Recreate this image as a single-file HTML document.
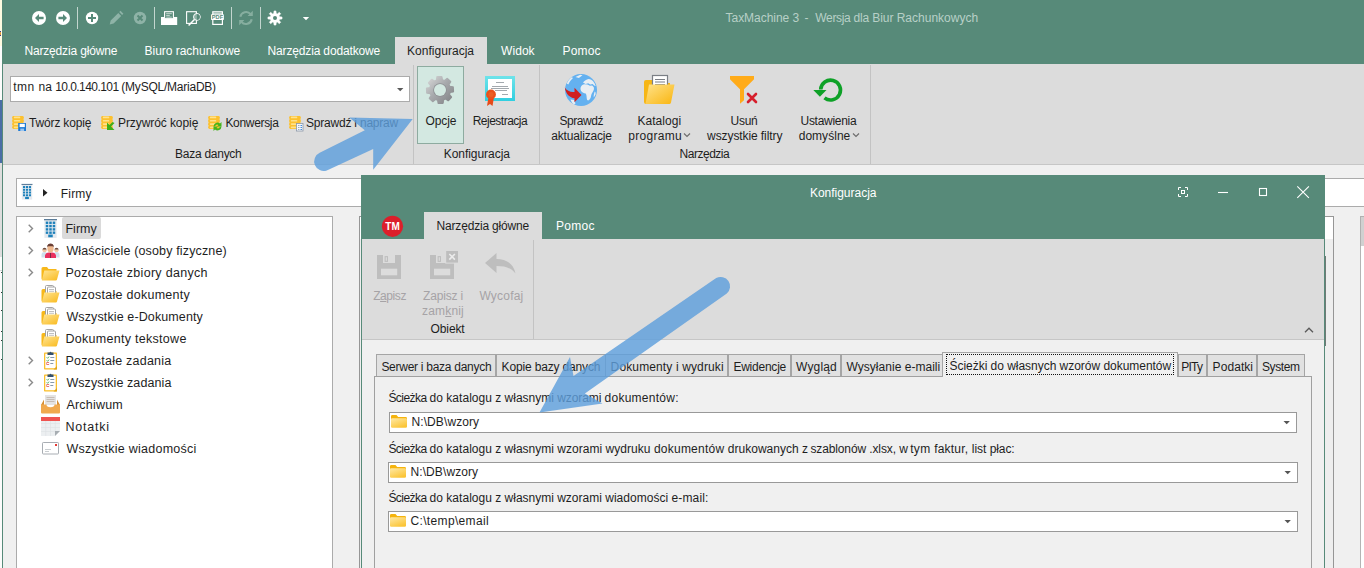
<!DOCTYPE html>
<html lang="pl">
<head>
<meta charset="utf-8">
<title>TaxMachine 3 - Konfiguracja</title>
<style>
html,body{margin:0;padding:0;overflow:hidden}
body{width:1364px;height:568px;overflow:hidden;position:relative;background:#f0f0f0;font-family:"Liberation Sans",sans-serif;font-size:12px;color:#1e1e1e}
div,span,svg{box-sizing:border-box}
.a{position:absolute}
.t{position:absolute;white-space:pre;line-height:16px;height:16px}
.fT{font-size:12.5px}
u{text-decoration:underline;text-decoration-thickness:1px;text-underline-offset:1px}
.sep{position:absolute;width:1px;background:#c3c3c3}
.combo{position:absolute;background:#fff;border:1px solid #999}
.tab{position:absolute;top:354px;height:22px;background:#e1e1e1;border:1px solid #a5a5a5;border-bottom:none}
svg{position:absolute;overflow:visible}
</style>
</head>
<body>
<div id="root" style="position:absolute;left:0;top:0;width:1364px;height:568px;overflow:hidden">
<!-- desktop strip at far left -->
<div class="a" style="left:0;top:0;width:2px;height:568px;background:#fcfcfc"></div>
<div class="a" style="left:0;top:0;width:2px;height:46px;background:#fffbe1"></div>
<div class="a" style="left:0;top:31px;width:1px;height:5px;background:#e39a3c;border-top:1px solid #3c3c8c;border-bottom:1px solid #3c3c8c"></div>
<div class="a" style="left:0;top:100px;width:2px;height:63px;background:#4a6ea6"></div>
<div class="a" style="left:0;top:163px;width:2px;height:94px;background:#dedede"></div>
<div class="a" style="left:0;top:270px;width:2px;height:1px;background:#d8d8d8"></div>
<div class="a" style="left:1px;top:272px;width:1px;height:1px;background:#333"></div>
<div class="a" style="left:1px;top:292px;width:1px;height:1px;background:#333"></div>
<div class="a" style="left:1px;top:310px;width:1px;height:1px;background:#333"></div>
<div class="a" style="left:1px;top:331px;width:1px;height:1px;background:#333"></div>
<div class="a" style="left:1px;top:340px;width:1px;height:1px;background:#333"></div>
<div class="a" style="left:1px;top:359px;width:1px;height:1px;background:#333"></div>

<!-- main window -->
<div class="a" style="left:2px;top:0;width:1362px;height:568px;background:#f0f0f0">
  <div class="a" style="left:0;top:0;width:1362px;height:64px;background:#578a79"></div>
  <div class="a" style="left:0;top:64px;width:1362px;height:100px;background:#dcdcdc"></div>
  <div class="a" style="left:0;top:164px;width:1362px;height:1px;background:#c6c6c6"></div>
  <div class="a" style="left:0;top:0;width:1px;height:568px;background:#578a79"></div>
</div>
<!-- active ribbon tab -->
<div class="a" style="left:395px;top:37px;width:92px;height:28px;background:#dcdcdc"></div>
<!-- ribbon: Baza danych -->
<div class="combo" style="left:10px;top:76px;width:400px;height:26px;border-color:#ababab"></div>
<svg style="left:397px;top:88px" width="7" height="4"><path d="M0 0h6.400l-3.200 3.200z" fill="#5a5a5a"/></svg>
<div class="sep" style="left:413px;top:65px;height:99px"></div>
<div class="a" style="left:417px;top:66px;width:47px;height:78px;background:#d3e8e1;border:1px solid #8eaba0"></div>
<div class="sep" style="left:539px;top:65px;height:99px"></div>
<div class="sep" style="left:870px;top:65px;height:99px"></div>
<svg id="qat" style="left:0;top:0" width="320" height="36" viewBox="0 0 320 36">
  <g fill="#fff">
    <circle cx="39" cy="18" r="7"/>
    <circle cx="63" cy="18" r="7"/>
    <circle cx="92" cy="18" r="6.2"/>
  </g>
  <path d="M35 18l4-4v2.7h4.6v2.6H39V22z" fill="#578a79"/>
  <path d="M67 18l-4-4v2.7h-4.6v2.6H63V22z" fill="#578a79"/>
  <path d="M88 18h8M92 14v8" stroke="#578a79" stroke-width="2" fill="none"/>
  <g fill="#8eb3a7">
    <path d="M109.700 24.500l1-3.900 7.600-7.600 2.900 2.900-7.600 7.600zM119.200 12.100l1.300-1.300 2.900 2.900-1.300 1.300z"/>
    <circle cx="140" cy="18" r="6.2"/>
  </g>
  <path d="M137.500 15.500l5 5M142.500 15.500l-5 5" stroke="#578a79" stroke-width="2" fill="none"/>
  <g fill="#c3d6cf">
    <rect x="77" y="7" width="1" height="22"/>
    <rect x="154" y="7" width="1" height="22"/>
    <rect x="231" y="7" width="1" height="22"/>
    <rect x="260" y="7" width="1" height="22"/>
  </g>
  <!-- print -->
  <rect x="161" y="17" width="16.200" height="8" fill="#fff"/>
  <rect x="164.600" y="11.700" width="8.800" height="7" fill="#578a79" stroke="#fff" stroke-width="1.100"/>
  <path d="M166.200 13.700h5.600M166.200 15.400h3.600M166.200 17.100h5.600" stroke="#d4e3dd" stroke-width="0.900"/>
  <!-- preview -->
  <rect x="186.600" y="11.700" width="9.800" height="11.700" fill="none" stroke="#fff" stroke-width="1.100"/>
  <circle cx="196.900" cy="16.900" r="3.400" fill="#8fb3a6" stroke="#fff" stroke-width="1"/>
  <path d="M196.900 13.900a3 3 0 0 1 0 6z" fill="#578a79"/>
  <path d="M194.400 19.500l-5.800 6" stroke="#fff" stroke-width="1.500"/>
  <!-- pdf -->
  <rect x="212.800" y="11.800" width="9.600" height="12.600" fill="none" stroke="#fff" stroke-width="1.200"/>
  <path d="M213 13.300h9.500" stroke="#fff" stroke-width="0.800"/>
  <rect x="211" y="14.200" width="12.900" height="5.800" rx="0.800" fill="#fff"/>
  <text x="217.450" y="19.300" font-family="'Liberation Sans',sans-serif" font-size="5.600" font-weight="bold" fill="#578a79" text-anchor="middle" letter-spacing="0.100">PDF</text>
  <!-- refresh dim -->
  <g fill="none" stroke="#86ae9f" stroke-width="2.100">
    <path d="M240.300 16.800a5.900 5.900 0 0 1 10.300-2.700"/>
    <path d="M251.700 19.200a5.900 5.900 0 0 1-10.300 2.700"/>
  </g>
  <path d="M252.800 10.800v5.200h-5.200zM239.200 25.200v-5.200h5.200z" fill="#86ae9f"/>
  <!-- gear -->
  <g transform="translate(275 18)">
    <path d="M-1.22 -4.54L-0.93 -7.04L0.93 -7.04L1.22 -4.54L2.35 -4.07L4.32 -5.63L5.63 -4.32L4.07 -2.35L4.54 -1.22L7.04 -0.93L7.04 0.93L4.54 1.22L4.07 2.35L5.63 4.32L4.32 5.63L2.35 4.07L1.22 4.54L0.93 7.04L-0.93 7.04L-1.22 4.54L-2.35 4.07L-4.32 5.63L-5.63 4.32L-4.07 2.35L-4.54 1.22L-7.04 0.93L-7.04 -0.93L-4.54 -1.22L-4.07 -2.35L-5.63 -4.32L-4.32 -5.63L-2.35 -4.07Z" fill="#fff" stroke="#fff" stroke-width="0.600" stroke-linejoin="round"/>
    <circle r="2" fill="#578a79"/>
  </g>
  <path d="M302.800 17h6.400l-3.200 3.200z" fill="#fff"/>
</svg>
<svg id="ribicons" style="left:0;top:64px" width="880" height="100" viewBox="0 64 880 100">
  <defs>
    <linearGradient id="gg" x1="0" y1="0" x2="1" y2="1"><stop offset="0" stop-color="#dadada"/><stop offset="0.45" stop-color="#a9abae"/><stop offset="1" stop-color="#7f8083"/></linearGradient>
    <linearGradient id="fg" x1="0" y1="0" x2="1" y2="1"><stop offset="0" stop-color="#ffe28a"/><stop offset="1" stop-color="#f9b50f"/></linearGradient>
    <linearGradient id="cy" x1="0" y1="0" x2="0" y2="1"><stop offset="0" stop-color="#6fe3ea"/><stop offset="1" stop-color="#30cfe0"/></linearGradient>
    <linearGradient id="db" x1="0" y1="0" x2="1" y2="0"><stop offset="0" stop-color="#ffe27a"/><stop offset="0.5" stop-color="#ffd23f"/><stop offset="1" stop-color="#f7b51c"/></linearGradient>
  </defs>
  <!-- gear -->
  <g transform="translate(440 90)">
    <path d="M-3.24 -9.67L-2.88 -12.98L1.51 -13.21L2.21 -9.96L4.55 -9.13L7.15 -11.22L10.41 -8.28L8.60 -5.48L9.67 -3.24L12.98 -2.88L13.21 1.51L9.96 2.21L9.13 4.55L11.22 7.15L8.28 10.41L5.48 8.60L3.24 9.67L2.88 12.98L-1.51 13.21L-2.21 9.96L-4.55 9.13L-7.15 11.22L-10.41 8.28L-8.60 5.48L-9.67 3.24L-12.98 2.88L-13.21 -1.51L-9.96 -2.21L-9.13 -4.55L-11.22 -7.15L-8.28 -10.41L-5.48 -8.60Z" fill="url(#gg)" stroke="url(#gg)" stroke-width="1.8" stroke-linejoin="round"/>
    <circle r="6.800" fill="#8d8f93"/>
    <circle r="6" fill="#d3e8e1"/>
  </g>
  <!-- certificate -->
  <rect x="485" y="76" width="30" height="25" fill="url(#cy)"/>
  <rect x="488" y="79" width="24" height="19" fill="#fff"/>
  <g stroke="#a3a9ae" stroke-width="1">
    <path d="M496 82.500h8M492 86.500h16M491 88.500h18M495 90.500h12M502 94.500h6"/>
  </g>
  <path d="M488.500 97l-1.500 9 3-2 2.500 2 1.500-9z" fill="#e64a19"/>
  <circle cx="491" cy="94.400" r="4.900" fill="#e8521c"/>
  <circle cx="491" cy="94.400" r="2.500" fill="#ea6025"/>
  <!-- globe -->
  <circle cx="581" cy="90" r="16" fill="#64b1f0"/>
  <g fill="#e9eef3">
    <path d="M583 82.500c1.500-1.800 3.500-3 5.500-3.400c2 0 3.600 1 4.800 2.500c1 1.300 1.800 2.800 2.400 4.400l-1.600-0.400l-1.400-1.700l-2.500 0.600l-2-1.200l-2.600 0.800z"/>
    <path d="M580.500 88c0.400-2 1.700-3.400 3.600-3.800l3.300 0.300l2.500 1.300l2.300-0.300l1.600 1.700c0.400 1.600 0 3-0.800 4.300c-1 1.600-1.800 3-2 4.800c-0.200 1.700-1 3.200-2.300 4c-1 0.400-1.700-0.300-1.900-1.500c-0.300-2 0-3.700-1.100-5.300c-1.700-0.400-3.500-1-4.600-2.500c-0.500-1-0.700-2-0.600-3z"/>
    <path d="M594.800 91.500c0.800 0.600 1 1.800 0.600 3.200l-1.600 2.800c-0.300-2 0.200-4 1-6z"/>
    <path d="M575.500 77l4.800-2.300l2.200 0.600l-3.600 2.600z"/>
    <path d="M566.800 83.500c1-2.500 2.800-4.800 5-6.300l1.200 0.900c-2 1.800-3.700 3.900-4.700 6.500z"/>
    <path d="M570.500 99.500l3.600 0.500l1.400 3.600l-1.600 0.800c-1.600-1.300-2.700-3-3.400-4.900z"/>
  </g>
  <path d="M564.800 87.500c1 6.500 5 10.300 9.700 10.800v3.900l7-7.200l-7-7.200v4.100c-4 0.500-7.700-1.200-9.700-4.400z" fill="#d01f1f"/>
  <!-- folder with paper -->
  <path d="M644 82a2 2 0 0 1 2-2h7l2 3h15v19a2 2 0 0 1-2 2h-22a2 2 0 0 1-2-2z" fill="#f6b616"/>
  <rect x="652.500" y="75.500" width="15" height="16" fill="#fff" stroke="#7b7f85" stroke-width="1.200"/>
  <path d="M655 79.500h10M655 82h10M655 84.500h10" stroke="#7b7f85" stroke-width="1.200"/>
  <path d="M649 84.500h25.500l-3.500 18a2 2 0 0 1-2 1.500h-23.500z" fill="url(#fg)"/>
  <!-- filter -->
  <path d="M730 76h24v3.300l-10 10v11l-4 3.500v-14.500l-10-10z" fill="#ffab19"/>
  <path d="M748 94l8 8M756 94l-8 8" stroke="#d61f2c" stroke-width="2.600" stroke-linecap="round" fill="none"/>
  <!-- refresh green -->
  <path d="M820.700 89.500a9.900 9.900 0 1 1 3.800 8.400" fill="none" stroke="#0ea127" stroke-width="3.600"/>
  <path d="M813.300 90h13.200l-6.600 6.800z" fill="#0ea127"/>
  <!-- chevrons -->
  <g fill="none" stroke="#6e6e6e" stroke-width="1.200">
    <path d="M684 133.500l3 3 3-3"/>
    <path d="M853 133.500l3 3 3-3"/>
  </g>
  <!-- small db icons -->
  <g id="dbi">
    <rect x="12.600" y="117" width="10.800" height="11" fill="#fdc63c"/>
    <rect x="12.200" y="116" width="11.600" height="3.100" rx="1.400" fill="#fcc02e"/><rect x="13.800" y="116.6" width="6.500" height="1.700" rx="0.850" fill="#ffe28c"/><rect x="12.200" y="119.3" width="11.600" height="3.100" rx="1.400" fill="#fcc02e"/><rect x="13.800" y="119.9" width="6.500" height="1.700" rx="0.850" fill="#ffe28c"/><rect x="12.200" y="122.6" width="11.600" height="3.100" rx="1.400" fill="#fcc02e"/><rect x="13.800" y="123.2" width="6.500" height="1.700" rx="0.850" fill="#ffe28c"/><rect x="12.200" y="125.9" width="11.600" height="3.100" rx="1.400" fill="#fcc02e"/><rect x="13.800" y="126.5" width="6.500" height="1.700" rx="0.850" fill="#ffe28c"/>
  </g>
  <use href="#dbi" x="89"/>
  <use href="#dbi" x="196"/>
  <use href="#dbi" x="277"/>
  <!-- save overlay -->
  <path d="M18.200 123h7.800v8h-7.800z" fill="#1f7ad4"/>
  <rect x="19.600" y="123.800" width="5.200" height="3.300" fill="#fff"/>
  <rect x="20.300" y="128.600" width="3.800" height="2.400" fill="#9cc6ef"/>
  <!-- green arrow overlay -->
  <path d="M114.500 123l-3.500 3.500 3.500 3.500h-7.500v-7.500l2.500 2.500 3-3z" fill="#3fae19" transform="rotate(0)"/>
  <!-- green cycle overlay -->
  <g fill="#46b41c">
    <path d="M213.500 126.500a4 4 0 0 1 6.500-3l1.500-1.500v4.500h-4.500l1.500-1.500a2.500 2.500 0 0 0-3.500 1.500z"/>
    <path d="M221.500 126.500a4 4 0 0 1-6.500 3l-1.500 1.500v-4.500h4.500l-1.500 1.500a2.500 2.500 0 0 0 3.500-1.500z"/>
  </g>
  <!-- doc overlay -->
  <rect x="296.500" y="123.500" width="6.500" height="7.500" fill="#f4f7fb" stroke="#8b97a8" stroke-width="0.800"/>
  <path d="M298 125.500h1.500M298 127.500h1.500M298 129.500h1.500" stroke="#8b97a8" stroke-width="0.800"/>
  <path d="M300.500 125.500h1.500M300.500 127.500h1.500M300.500 129.500h1.500" stroke="#2f80d8" stroke-width="0.900"/>
</svg>

<!-- breadcrumb -->
<div class="a" style="left:16px;top:178px;width:1360px;height:29px;background:#fff;border:1px solid #ababab"></div>
<svg style="left:43px;top:189px" width="6" height="9"><path d="M0 0l4.500 3.700l-4.500 3.700z" fill="#222"/></svg>

<!-- tree -->
<div class="a" style="left:16px;top:216px;width:317px;height:360px;background:#fff;border:1px solid #ababab"></div>
<div class="a" style="left:62px;top:217px;width:39px;height:22px;background:#dadada;border-radius:2px"></div>
<svg id="treeicons" style="left:0;top:176px" width="340" height="392" viewBox="0 176 340 392">
  <defs>
    <linearGradient id="tf" x1="0" y1="0" x2="1" y2="1"><stop offset="0" stop-color="#ffe596"/><stop offset="1" stop-color="#f9b91a"/></linearGradient>
    <g id="chev"><path d="M0 0l3.800 3.800l-3.800 3.800" fill="none" stroke="#8a8a8a" stroke-width="1.400"/></g>
    <g id="bld">
      <rect x="0.300" y="1" width="10.400" height="15" fill="#e3e9ef"/>
      <rect x="0" y="0" width="11" height="1.100" fill="#5b7c99"/>
      <g fill="#1d80ba"><rect x="1.5" y="2.2" width="2.1" height="2"/><rect x="4.45" y="2.2" width="2.1" height="2"/><rect x="7.4" y="2.2" width="2.1" height="2"/><rect x="1.5" y="5" width="2.1" height="2"/><rect x="4.45" y="5" width="2.1" height="2"/><rect x="7.4" y="5" width="2.1" height="2"/><rect x="1.5" y="7.8" width="2.1" height="2"/><rect x="4.45" y="7.8" width="2.1" height="2"/><rect x="7.4" y="7.8" width="2.1" height="2"/><rect x="1.5" y="10.6" width="2.1" height="2"/><rect x="4.45" y="10.6" width="2.1" height="2"/><rect x="7.4" y="10.6" width="2.1" height="2"/><rect x="3.600" y="13.200" width="3.800" height="2.300"/></g>
    </g>
    <g id="fold">
      <path d="M0.500 2.500a1.500 1.500 0 0 1 1.500-1.500h4l1.500 2h8v9.500a1.500 1.500 0 0 1-1.500 1.500h-12a1.500 1.500 0 0 1-1.500-1.500z" fill="#f7b81b"/>
      <path d="M3.300 4.500h15.200l-2.500 9a1.300 1.300 0 0 1-1.200 1h-14z" fill="url(#tf)"/>
    </g>
    <g id="foldd">
      <path d="M0.500 2.500a1.500 1.500 0 0 1 1.500-1.500h4l1.500 2h8v9.500a1.500 1.500 0 0 1-1.500 1.500h-12a1.500 1.500 0 0 1-1.500-1.500z" fill="#f7b81b"/>
      <rect x="4.500" y="-2.500" width="8" height="8" rx="1" fill="#fff" stroke="#9a9a9a" stroke-width="0.900"/>
      <rect x="6.500" y="-1" width="8" height="8" rx="1" fill="#fff" stroke="#9a9a9a" stroke-width="0.900"/>
      <path d="M8 1.500h5M8 3.300h5" stroke="#b0b0b0" stroke-width="0.800"/>
      <path d="M3.300 4.500h15.200l-2.500 9a1.300 1.300 0 0 1-1.200 1h-14z" fill="url(#tf)"/>
    </g>
    <g id="clip">
      <rect x="0" y="1.500" width="13" height="17" rx="0.800" fill="#fbc02d"/>
      <rect x="1.300" y="2.800" width="10.400" height="14.400" fill="#fff"/>
      <path d="M13 18.500l-3.500 0 3.500-3.500z" fill="#e0a61c"/>
      <path d="M3.500 1.500h2a1.100 1.100 0 0 1 2 0h2v2.500h-6z" fill="#34516f"/>
      <path d="M6.300 6.500h4M6.300 9.500h4M6.300 12.500h3" stroke="#7b8fa3" stroke-width="0.900"/>
      <path d="M2.700 6.400l0.900 0.900 1.400-1.700M2.700 9.400l0.900 0.900 1.400-1.700" fill="none" stroke="#3aa657" stroke-width="0.900"/>
      <rect x="2.800" y="11.600" width="1.900" height="1.900" fill="none" stroke="#e25555" stroke-width="0.800"/>
    </g>
  </defs>
  <!-- breadcrumb building -->
  <use href="#bld" transform="translate(21.500 183.900) scale(1 0.980)"/>
  <!-- row 1 -->
  <use href="#chev" x="28.700" y="224.700"/>
  <use href="#bld" transform="translate(44 219) scale(1.180 1.180)"/>
  <!-- row 2 -->
  <use href="#chev" x="28.700" y="246.700"/>
  <g>
    <circle cx="44.500" cy="250.300" r="2.100" fill="#f1c9a5"/>
    <path d="M41.500 257.500v-2.500a3 3 0 0 1 6 0v2.500z" fill="#cfe0ec"/>
    <path d="M42.400 249.500a2.200 2.200 0 0 1 4.300 0z" fill="#6d4c41"/>
    <circle cx="56.500" cy="250.300" r="2.100" fill="#f1c9a5"/>
    <path d="M53.500 257.500v-2.500a3 3 0 0 1 6 0v2.500z" fill="#cfe0ec"/>
    <path d="M54.400 249.500a2.200 2.200 0 0 1 4.300 0z" fill="#6d4c41"/>
    <path d="M45 258v-2.500a4 4 0 0 1 4-3h3a4 4 0 0 1 4 3v2.500z" fill="#e9315f"/>
    <rect x="50" y="253" width="1" height="5" fill="#7a2a45"/>
    <ellipse cx="50.500" cy="248.500" rx="3.100" ry="3.900" fill="#efb98f"/>
    <path d="M47.200 247.500a3.300 3.600 0 0 1 6.600 0l-0.700-1.200h-5.200z" fill="#6a3f35"/>
    <path d="M47.300 246.600c0-4 6.400-4 6.400 0c-1.500-1.300-4.900-1.300-6.400 0z" fill="#6a3f35"/>
  </g>
  <!-- row 3 -->
  <use href="#chev" x="28.700" y="268.700"/>
  <use href="#fold" x="41" y="266"/>
  <use href="#foldd" x="41" y="288"/>
  <use href="#foldd" x="41" y="310"/>
  <use href="#foldd" x="41" y="332"/>
  <!-- tasks -->
  <use href="#chev" x="28.700" y="356.700"/>
  <use href="#clip" x="44" y="351"/>
  <use href="#chev" x="28.700" y="378.700"/>
  <use href="#clip" x="44" y="373"/>
  <!-- archive -->
  <g>
    <rect x="45" y="395" width="11" height="10" fill="#e3e3e3"/>
    <path d="M46.500 397.500h8M46.500 399.500h8M46.500 401.500h8" stroke="#c4b9b0" stroke-width="0.900"/>
    <path d="M41 405l3-5.500v5.500zM60 405l-3-5.500v5.500z" fill="#d68f35"/>
    <path d="M41 404.500h5.500a4 2.800 0 0 0 8 0h5.500v8a1 1 0 0 1-1 1h-17a1 1 0 0 1-1-1z" fill="#f0a94e"/>
  </g>
  <!-- notes -->
  <g>
    <path d="M41 417h19v14l-5 5h-14z" fill="#eceff1"/>
    <path d="M41 423.500h19M41 427.500h19M41 431.500h17M45.700 420v16M50.500 420v16M55.300 420v13" stroke="#dde1e4" stroke-width="0.600"/>
    <rect x="41" y="417" width="19" height="4" fill="#ef5350"/>
    <path d="M55 436v-5h5z" fill="#a7adb2"/>
  </g>
  <!-- mail -->
  <g>
    <rect x="42.500" y="442.500" width="16" height="11.500" rx="0.800" fill="#fff" stroke="#9ea4aa" stroke-width="0.900"/>
    <rect x="55" y="444" width="2" height="2" fill="#e53935"/>
    <path d="M45 449.500h6M45 451.500h4" stroke="#c3c7cb" stroke-width="0.900"/>
  </g>
</svg>


<!-- right panel behind dialog -->
<div class="a" style="left:359px;top:216px;width:975px;height:360px;background:#eee;border:1px solid #969696"></div>
<div class="a" style="left:360px;top:217px;width:973px;height:22px;background:#fff"></div>
<div class="a" style="left:1325px;top:256px;width:1px;height:90px;background:#6f7a76"></div>
<div class="a" style="left:1360px;top:216px;width:4px;height:352px;background:#fff;border-left:1px solid #b4b4b4"></div>
<div class="a" style="left:1360px;top:216px;width:4px;height:30px;background:#d0d0d0;border-left:1px solid #b0b0b0;border-top:1px solid #b0b0b0"></div>

<!-- dialog -->
<div class="a" style="left:361px;top:175px;width:964px;height:400px;background:#f0f0f0;border-left:1px solid #578a79;border-right:1px solid #578a79">
  <div class="a" style="left:-1px;top:0;width:964px;height:64px;background:#578a79"></div>
  <div class="a" style="left:0;top:64px;width:962px;height:100px;background:#dcdcdc"></div>
  <div class="a" style="left:0;top:164px;width:962px;height:1px;background:#c6c6c6"></div>
  <div class="a" style="left:62px;top:37px;width:118px;height:28px;background:#dcdcdc"></div>
  <div class="sep" style="left:171px;top:65px;height:99px"></div>
</div>
<svg id="dlgicons" style="left:361px;top:175px" width="964" height="170" viewBox="361 175 964 170">
  <!-- window buttons -->
  <g fill="none" stroke="#fff" stroke-width="1">
    <path d="M1178.500 190v-2.500h2.500M1185 187.500h2.500v2.500M1187.500 194v2.500h-2.500M1181 196.500h-2.500v-2.500"/>
    <rect x="1181.500" y="190.500" width="3" height="3"/>
    <path d="M1218 192.500h10" stroke-width="1.100"/>
    <rect x="1259.500" y="188.500" width="7" height="7" stroke-width="1.100"/>
    <path d="M1297.300 186.300l11.600 11.600M1308.900 186.300l-11.600 11.600" stroke-width="1.100"/>
  </g>
  <!-- TM logo -->
  <circle cx="392.500" cy="226.300" r="10.600" fill="#dc1f2b"/>
  <text x="392.600" y="230" font-family="'Liberation Sans',sans-serif" font-size="10" font-weight="bold" fill="#fff" text-anchor="middle">TM</text>
  <!-- save -->
  <g fill="#bebebe">
    <rect x="377" y="255" width="24" height="24"/>
    <rect x="383" y="255" width="12" height="8" fill="#dcdcdc"/>
    <rect x="384.600" y="256.100" width="3.400" height="5.800" fill="#bebebe"/>
    <rect x="385.700" y="257.200" width="1.200" height="3.600" fill="#dcdcdc"/>
    <rect x="381" y="268.700" width="16.200" height="6.600" fill="#dcdcdc"/>
  </g>
  <g fill="#bebebe">
    <rect x="430" y="255" width="24" height="24"/>
    <rect x="436" y="255" width="12" height="8" fill="#dcdcdc"/>
    <rect x="437.600" y="256.100" width="3.400" height="5.800" fill="#bebebe"/>
    <rect x="438.700" y="257.200" width="1.200" height="3.600" fill="#dcdcdc"/>
    <rect x="434" y="268.700" width="16.200" height="6.600" fill="#dcdcdc"/>
    <rect x="445.200" y="250" width="13.800" height="13.600" fill="#dcdcdc"/>
    <rect x="446.200" y="251" width="11.800" height="11.600"/>
  </g>
  <path d="M449.300 254l5.600 5.600M454.900 254l-5.600 5.600" stroke="#ececec" stroke-width="1.600" fill="none"/>
  <!-- undo -->
  <path d="M485 263l11.500-10v6c9 0 17 4 19 14.500c-4-5.500-10-7.500-19-7.500v7z" fill="#bebebe"/>
  <!-- collapse chevron -->
  <path d="M1305 332.200l4-4 4 4" fill="none" stroke="#5a5a5a" stroke-width="1.300"/>
</svg>


<!-- tab control -->
<div class="a" style="left:374px;top:376px;width:938px;height:200px;border:1px solid #a0a0a0;background:#f0f0f0"></div>
<div class="tab" style="left:376px;width:120px"></div>
<div class="tab" style="left:496px;width:110px"></div>
<div class="tab" style="left:605px;width:123px"></div>
<div class="tab" style="left:728px;width:63px"></div>
<div class="tab" style="left:791px;width:50px"></div>
<div class="tab" style="left:841px;width:102px"></div>
<div class="tab" style="left:1178px;width:29px"></div>
<div class="tab" style="left:1207px;width:50px"></div>
<div class="tab" style="left:1257px;width:48px"></div>
<div class="tab" style="left:942px;width:236px;top:352px;height:25px;background:#f0f0f0">
  <div class="a" style="left:3px;top:1px;width:228px;height:21px;border:1px dotted #111"></div></div>

<div class="combo" style="left:389px;top:412px;width:908px;height:21px"></div>
<div class="combo" style="left:388px;top:462px;width:910px;height:21px"></div>
<div class="combo" style="left:388px;top:511px;width:910px;height:21px"></div>
<svg id="comboicons" style="left:380px;top:405px" width="930" height="135" viewBox="380 405 930 135">
  <defs>
    <linearGradient id="cf" x1="0" y1="0" x2="0.600" y2="1"><stop offset="0" stop-color="#ffe9a6"/><stop offset="1" stop-color="#fbc537"/></linearGradient>
    <g id="cfold">
      <path d="M0 1.300a1.300 1.300 0 0 1 1.300-1.300h4.200l1.700 2h7.500a1.300 1.300 0 0 1 1.300 1.300v2h-16z" fill="#f5b40e"/>
      <rect x="0" y="3.200" width="16" height="9.600" rx="1.200" fill="url(#cf)"/>
    </g>
    <path id="dd" d="M0 0h6.400l-3.200 3.200z" fill="#555"/>
  </defs>
  <use href="#cfold" x="391" y="415"/>
  <use href="#cfold" x="390" y="465"/>
  <use href="#cfold" x="390" y="514"/>
  <use href="#dd" x="1283.500" y="421"/>
  <use href="#dd" x="1284.500" y="471"/>
  <use href="#dd" x="1284.500" y="520"/>
</svg>


<span class="t" style="left:725.6px;top:10px;color:#b7d0c7"><span style="letter-spacing:-0.05px">TaxMachine </span><span style="letter-spacing:-0.45px">3  </span><span style="letter-spacing:0.08px">-  </span><span style="letter-spacing:-0.34px">Wersja </span><span style="letter-spacing:-0.11px">dla </span><span style="letter-spacing:-0.07px">Biur </span><span style="letter-spacing:0.01px">Rachunkowych</span></span>
<span class="t" style="left:24.4px;top:43px;letter-spacing:-0.16px;color:#fff">Narzędzia główne</span>
<span class="t" style="left:144.5px;top:43px;letter-spacing:-0.02px;color:#fff">Biuro rachunkowe</span>
<span class="t" style="left:267.5px;top:43px;letter-spacing:-0.15px;color:#fff">Narzędzia dodatkowe</span>
<span class="t" style="left:407.0px;top:43px;letter-spacing:0.03px">Konfiguracja</span>
<span class="t" style="left:501.0px;top:43px;letter-spacing:0.07px;color:#fff">Widok</span>
<span class="t" style="left:562.5px;top:43px;letter-spacing:0.19px;color:#fff">Pomoc</span>
<span class="t" style="left:13.2px;top:79px"><span style="letter-spacing:0.52px">tmn </span><span style="letter-spacing:-0.03px">na </span><span style="letter-spacing:-0.56px">10.0.140.101 </span><span style="letter-spacing:-0.23px">(MySQL/MariaDB)</span></span>
<span class="t" style="left:29.1px;top:115px;letter-spacing:-0.18px">Twórz kopię</span>
<span class="t" style="left:118.0px;top:115px;letter-spacing:-0.08px">Przywróć kopię</span>
<span class="t" style="left:225.4px;top:115px;letter-spacing:-0.32px">Konwersja</span>
<span class="t" style="left:306.0px;top:115px;letter-spacing:-0.21px">Sprawdź i napraw</span>
<span class="t" style="left:175.0px;top:146px;letter-spacing:-0.26px">Baza danych</span>
<span class="t" style="left:425.5px;top:113px;letter-spacing:-0.12px">Opcje</span>
<span class="t" style="left:472.7px;top:113px;letter-spacing:-0.50px">Rejestracja</span>
<span class="t" style="left:443.7px;top:146px;letter-spacing:-0.04px">Konfiguracja</span>
<span class="t" style="left:559.4px;top:113px;letter-spacing:-0.43px">Sprawdź</span>
<span class="t" style="left:551.3px;top:128px;letter-spacing:-0.18px">aktualizacje</span>
<span class="t" style="left:637.4px;top:113px;letter-spacing:0.06px">Katalogi</span>
<span class="t" style="left:628.2px;top:128px;letter-spacing:0.32px">programu</span>
<span class="t" style="left:730.5px;top:113px;letter-spacing:-0.25px">Usuń</span>
<span class="t" style="left:707.1px;top:128px;letter-spacing:-0.09px">wszystkie filtry</span>
<span class="t" style="left:800.5px;top:113px;letter-spacing:-0.28px">Ustawienia</span>
<span class="t" style="left:798.7px;top:128px;letter-spacing:0.03px">domyślne</span>
<span class="t" style="left:679.6px;top:146px;letter-spacing:-0.49px">Narzędzia</span>
<span class="t" style="left:60.7px;top:186px;letter-spacing:0.23px">Firmy</span>
<span class="t fT" style="left:65.4px;top:221px;letter-spacing:0.05px">Firmy</span>
<span class="t fT" style="left:66.4px;top:243px;letter-spacing:0.15px">Właściciele (osoby fizyczne)</span>
<span class="t fT" style="left:65.4px;top:265px;letter-spacing:0.30px">Pozostałe zbiory danych</span>
<span class="t fT" style="left:65.4px;top:287px;letter-spacing:0.27px">Pozostałe dokumenty</span>
<span class="t fT" style="left:66.4px;top:309px;letter-spacing:0.12px">Wszystkie e-Dokumenty</span>
<span class="t fT" style="left:65.4px;top:331px;letter-spacing:0.29px">Dokumenty tekstowe</span>
<span class="t fT" style="left:65.4px;top:353px;letter-spacing:0.23px">Pozostałe zadania</span>
<span class="t fT" style="left:66.4px;top:375px;letter-spacing:0.09px">Wszystkie zadania</span>
<span class="t fT" style="left:66.4px;top:397px;letter-spacing:0.21px">Archiwum</span>
<span class="t fT" style="left:65.4px;top:419px;letter-spacing:0.80px">Notatki</span>
<span class="t fT" style="left:66.4px;top:441px;letter-spacing:0.26px">Wszystkie wiadomości</span>
<span class="t" style="left:809.9px;top:185px;letter-spacing:-0.01px;color:#fff">Konfiguracja</span>
<span class="t" style="left:436.6px;top:218px;letter-spacing:-0.19px">Narzędzia główne</span>
<span class="t" style="left:556.0px;top:218px;letter-spacing:0.26px;color:#fff">Pomoc</span>
<span class="t" style="left:373.2px;top:288px;letter-spacing:-0.43px;color:#a6a3a6">Z<u>a</u>pisz</span>
<span class="t" style="left:423.0px;top:288px;letter-spacing:-0.17px;color:#a6a3a6">Zapisz i</span>
<span class="t" style="left:422.0px;top:303px;letter-spacing:0.18px;color:#a6a3a6">zam<u>k</u>nij</span>
<span class="t" style="left:479.4px;top:288px;letter-spacing:0.22px;color:#a6a3a6">Wycofaj</span>
<span class="t" style="left:430.6px;top:321px;letter-spacing:-0.13px">Obiekt</span>
<span class="t" style="left:381.4px;top:359px;letter-spacing:-0.27px">Serwer i baza danych</span>
<span class="t" style="left:501.6px;top:359px;letter-spacing:-0.16px">Kopie bazy danych</span>
<span class="t" style="left:610.6px;top:359px;letter-spacing:0.13px">Dokumenty i wydruki</span>
<span class="t" style="left:733.4px;top:359px;letter-spacing:-0.23px">Ewidencje</span>
<span class="t" style="left:796.1px;top:359px;letter-spacing:0.15px">Wygląd</span>
<span class="t" style="left:846.5px;top:359px;letter-spacing:0.03px">Wysyłanie e-maili</span>
<span class="t" style="left:949.5px;top:358px;letter-spacing:-0.03px">Ścieżki do własnych wzorów dokumentów</span>
<span class="t" style="left:1181.3px;top:359px;letter-spacing:-0.80px">PITy</span>
<span class="t" style="left:1212.6px;top:359px;letter-spacing:0.07px">Podatki</span>
<span class="t" style="left:1262.0px;top:359px;letter-spacing:-0.38px">System</span>
<span class="t" style="left:388.4px;top:390px"><span style="letter-spacing:-0.53px">Ścieżka </span><span style="letter-spacing:0.04px">do </span><span style="letter-spacing:0.03px">katalogu </span><span style="letter-spacing:-0.02px">z </span><span style="letter-spacing:-0.01px">własnymi </span><span style="letter-spacing:-0.09px">wzorami </span><span style="letter-spacing:0.27px">dokumentów:</span></span>
<span class="t" style="left:411.5px;top:414px;letter-spacing:0.09px">N:\DB\wzory</span>
<span class="t" style="left:388.4px;top:441px"><span style="letter-spacing:-0.53px">Ścieżka </span><span style="letter-spacing:0.04px">do </span><span style="letter-spacing:0.03px">katalogu </span><span style="letter-spacing:-0.02px">z </span><span style="letter-spacing:-0.01px">własnymi </span><span style="letter-spacing:0.04px">wzorami </span><span style="letter-spacing:0.05px">wydruku </span><span style="letter-spacing:0.23px">dokumentów </span><span style="letter-spacing:0.01px">drukowanych </span><span style="letter-spacing:-0.47px">z </span><span style="letter-spacing:-0.13px">szablonów </span><span style="letter-spacing:-0.08px">.xlsx, </span><span style="letter-spacing:-0.55px">w </span><span style="letter-spacing:0.33px">tym </span><span style="letter-spacing:0.20px">faktur, </span><span style="letter-spacing:-0.02px">list </span><span style="letter-spacing:-0.10px">płac:</span></span>
<span class="t" style="left:410.5px;top:464px;letter-spacing:0.09px">N:\DB\wzory</span>
<span class="t" style="left:388.4px;top:490px"><span style="letter-spacing:-0.53px">Ścieżka </span><span style="letter-spacing:0.04px">do </span><span style="letter-spacing:0.03px">katalogu </span><span style="letter-spacing:-0.02px">z </span><span style="letter-spacing:-0.01px">własnymi </span>wzorami <span style="letter-spacing:0.03px">wiadomości </span><span style="letter-spacing:0.12px">e-mail:</span></span>
<span class="t" style="left:410.5px;top:513px;letter-spacing:0.34px">C:\temp\email</span>

<!-- annotation arrows -->
<svg style="left:0;top:0" width="1364" height="568" viewBox="0 0 1364 568">
  <g fill="#5e9fdc" fill-opacity="0.82">
    <path d="M349.300 117.600L412.700 119L373.200 169.700L373.200 149L326.800 170.400A9.500 9.500 0 0 1 319.700 152.800L364.800 130.300Z"/>
    <path d="M539.500 412.400L570 357L573.500 376L716.200 278.100A9.400 9.400 0 0 1 726.800 293.500L584.900 393.600L602.500 403.400Z"/>
  </g>
</svg>
</div>
</body>
</html>
